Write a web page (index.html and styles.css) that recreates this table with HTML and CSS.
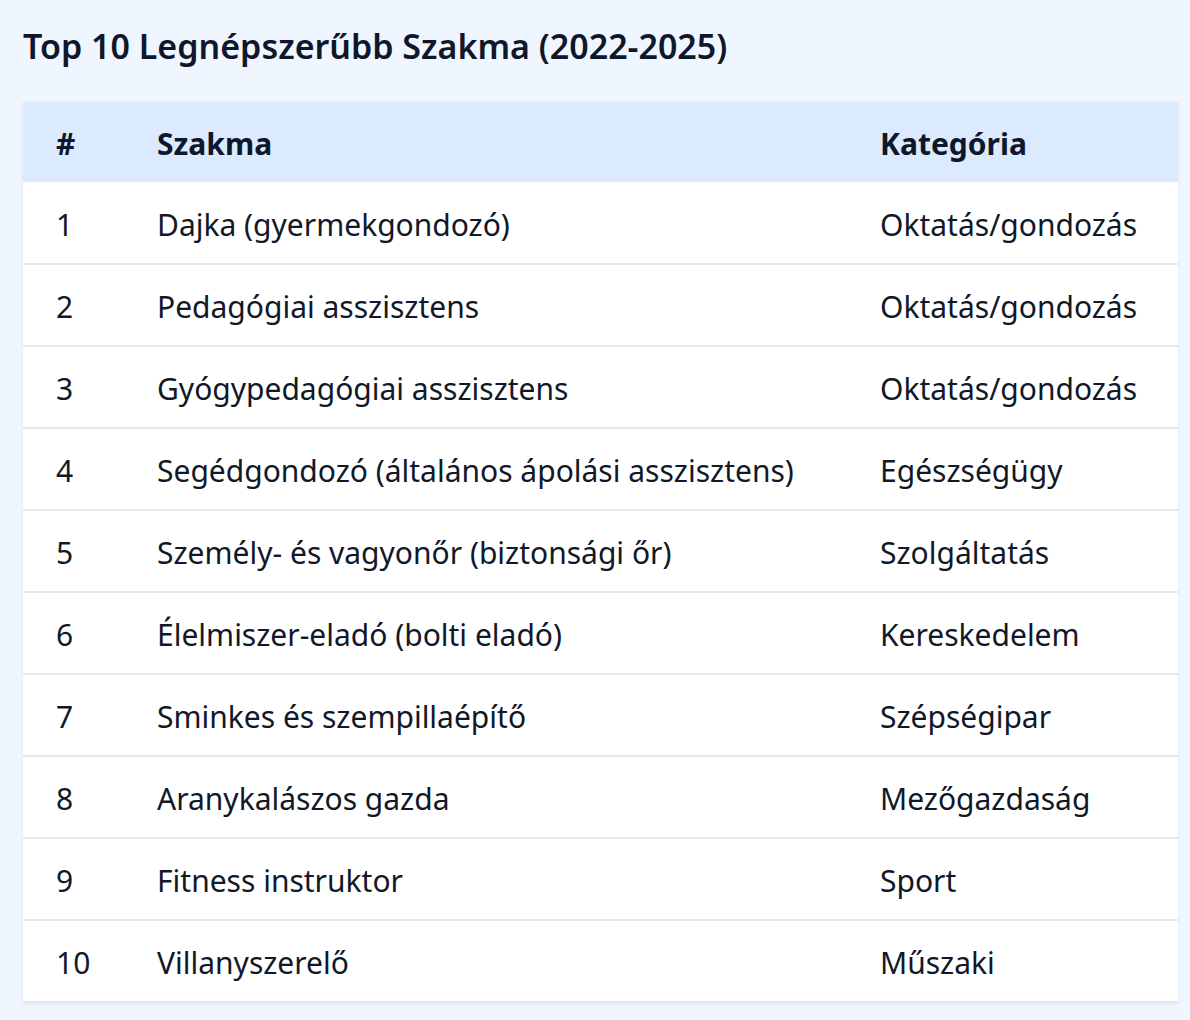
FILE: index.html
```html
<!DOCTYPE html>
<html lang="hu">
<head>
<meta charset="utf-8">
<title>Top 10 Legnépszerűbb Szakma</title>
<link rel="stylesheet" href="styles.css">
</head>
<body>
<div class="page">
  <h1 class="title">Top 10 Legnépszerűbb Szakma (2022-2025)</h1>
  <table class="jobs">
    <colgroup>
      <col class="c-num">
      <col class="c-name">
      <col class="c-cat">
    </colgroup>
    <thead>
      <tr><th>#</th><th>Szakma</th><th>Kategória</th></tr>
    </thead>
    <tbody>
      <tr><td>1</td><td>Dajka (gyermekgondozó)</td><td>Oktatás/gondozás</td></tr>
      <tr><td>2</td><td>Pedagógiai asszisztens</td><td>Oktatás/gondozás</td></tr>
      <tr><td>3</td><td>Gyógypedagógiai asszisztens</td><td>Oktatás/gondozás</td></tr>
      <tr><td>4</td><td>Segédgondozó (általános ápolási asszisztens)</td><td>Egészségügy</td></tr>
      <tr><td>5</td><td>Személy- és vagyonőr (biztonsági őr)</td><td>Szolgáltatás</td></tr>
      <tr><td>6</td><td>Élelmiszer-eladó (bolti eladó)</td><td>Kereskedelem</td></tr>
      <tr><td>7</td><td>Sminkes és szempillaépítő</td><td>Szépségipar</td></tr>
      <tr><td>8</td><td>Aranykalászos gazda</td><td>Mezőgazdaság</td></tr>
      <tr><td>9</td><td>Fitness instruktor</td><td>Sport</td></tr>
      <tr><td>10</td><td>Villanyszerelő</td><td>Műszaki</td></tr>
    </tbody>
  </table>
</div>
</body>
</html>
```
FILE: styles.css
```css
html, body {
  margin: 0;
  padding: 0;
  background: #eff6ff;
}
body {
  font-family: "Noto Sans", "Open Sans", sans-serif;
  color: #111827;
}
.page {
  padding: 20px 12px 20px 23px;
}
.title {
  margin: 0 0 30px 0;
  font-size: 34px;
  font-weight: 600;
  line-height: 52px;
  color: #0f172a;
}
.jobs {
  width: 1155px;
  border-collapse: collapse;
  background: #ffffff;
  box-shadow: 0 1px 3px rgba(0, 0, 0, 0.08);
  font-size: 30px;
}
.c-num { width: 101px; }
.c-name { width: 723px; }
.c-cat { width: 331px; }
.jobs th {
  background: #dbeafe;
  text-align: left;
  font-weight: 700;
  height: 80px;
  padding: 3px 33px 0;
  box-sizing: border-box;
  color: #0f172a;
}
.jobs td {
  height: 82px;
  padding: 3px 33px 0;
  box-sizing: border-box;
  border-bottom: 2px solid #e5e7eb;
  color: #111827;
  white-space: nowrap;
}
```
